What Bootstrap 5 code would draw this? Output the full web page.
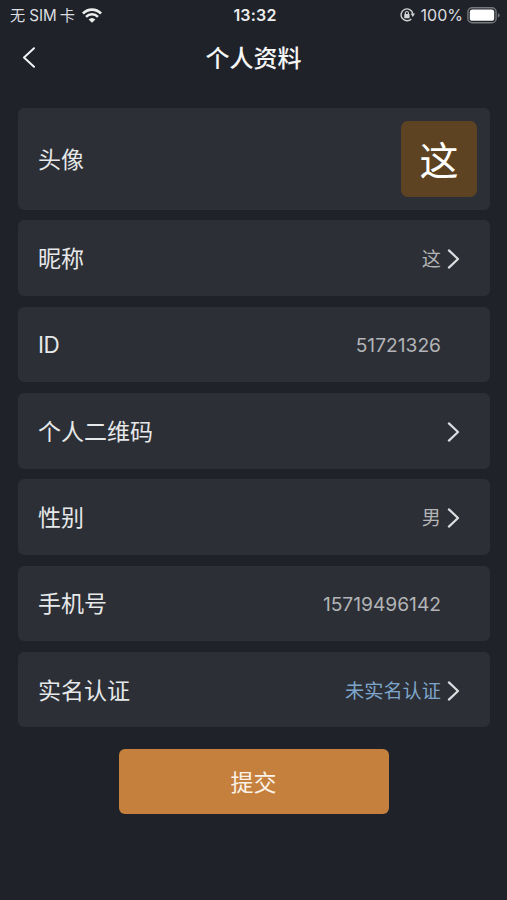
<!DOCTYPE html>
<html lang="zh-CN" data-bs-theme="dark">
<head>
<meta charset="utf-8">
<meta name="viewport" content="width=device-width, initial-scale=1">
<title>个人资料</title>
<link href="https://cdn.jsdelivr.net/npm/bootstrap@5.3.0/dist/css/bootstrap.min.css" rel="stylesheet">
<style>
  body { background: #1f2229; color: #e6e8ea; font-family: Inter, "Noto Sans CJK SC", sans-serif; height: 900px; overflow: hidden; }
  svg { display: block; flex: none; }
  .status-bar { height: 30px; padding: 0 7px 0 10px; font-size: 16px; line-height: 29px; color: #dcdde0; }
  .status-side { flex: 1 1 0; }
  .carrier { font-size: 15.2px; white-space: pre; }
  .carrier-latin { margin: 0 3px 0 4px; }
  .wifi { margin-left: 7px; }
  .clock { font-size: 16px; letter-spacing: .2px; color: #eceded; }
  .battery-text { margin: 0 4px 0 6px; }
  .title-bar { height: 56px; padding: 0 22px; }
  .title-side { width: 14px; }
  .page-title { font-size: 24px; line-height: 36px; padding-top: 2px; font-weight: 500; color: #f6f6f7; }
  .profile-list { padding: 22px 17px 0 18px; gap: 10.7px; }
  .profile-item { height: 75.6px; padding: 2px 13px 0 20px; border-radius: 6px; background: #2c2f35; }
  .profile-item.tall { height: 101.8px; padding-top: 0; }
  .profile-item.id-item { padding-top: 0; }
  .tall .item-label { padding-top: 2px; }
  .item-label { font-size: 23px; line-height: 34px; }
  .item-label.latin { font-size: 22.5px; letter-spacing: -.6px; }
  .item-value { font-size: 19.2px; line-height: 28px; color: #b2b4b7; }
  .item-value.unverified { color: #7ea5cb; }
  .arrow-slot { width: 36px; padding-left: 6px; }
  .avatar-tile { width: 76px; height: 76px; border-radius: 7px; background: #5d4321; color: #fff; font-size: 39px; line-height: 80px; }
  .submit-btn { --bs-btn-bg: #c5803d; --bs-btn-color: #fbf3e9; --bs-btn-hover-bg: #b67436; --bs-btn-hover-color: #fff; --bs-btn-border-width: 0; --bs-btn-border-radius: 6px; --bs-btn-font-size: 23px; width: 270px; height: 65px; margin-top: 21.5px; padding-top: 9px; }
</style>
</head>
<body>
<svg width="0" height="0" class="d-none" aria-hidden="true">
  <symbol id="arrow" viewBox="0 0 13 20"><path d="M1.9 1.4 11 10 1.9 18.6" fill="none" stroke="#dcdde0" stroke-width="2.2" stroke-linecap="round" stroke-linejoin="round"/></symbol>
</svg>

<header>
  <div class="status-bar d-flex align-items-center">
    <div class="status-side d-flex align-items-center">
      <span class="carrier">无<span class="carrier-latin">SIM</span>卡</span>
      <svg class="wifi" width="20" height="15" viewBox="0 0 20 15"><g fill="none" stroke="#eceded" stroke-width="2.6"><path d="M.9 5.5Q4.8 1.6 10 1.6T19.1 5.5"/><path d="M4 8.9Q6.6 6.3 10 6.3T16 8.9"/></g><path d="M6.6 11.5Q10 8.5 13.4 11.5L10 14.8Z" fill="#eceded"/></svg>
    </div>
    <div class="clock fw-semibold">13:32</div>
    <div class="status-side d-flex align-items-center justify-content-end">
      <svg width="15" height="14" viewBox="0 0 15 14"><path d="M11.3 10.9A5.9 5.9 0 1 1 12.8 5.6" fill="none" stroke="#d2d3d5" stroke-width="1.4"/><path d="M10.6 5.6H15L12.8 9Z" fill="#d2d3d5"/><rect x="4.2" y="6" width="5.4" height="4.2" rx=".6" fill="#d2d3d5"/><path d="M5.4 6.3V5a1.5 1.5 0 0 1 3 0v1.3" fill="none" stroke="#d2d3d5" stroke-width="1.2"/></svg>
      <span class="battery-text">100%</span>
      <svg width="33" height="17" viewBox="0 0 33 17"><rect x=".9" y=".7" width="28.2" height="15" rx="4.3" fill="none" stroke="#75777b" stroke-width="1.4"/><rect x="2.8" y="2.6" width="24.4" height="11.2" rx="2.6" fill="#fff"/><path d="M30.9 6q1.7.7 1.7 2.3t-1.7 2.3Z" fill="#75777b"/></svg>
    </div>
  </div>
  <nav class="title-bar d-flex align-items-center justify-content-between">
    <a href="#" class="title-side" aria-label="返回"><svg width="14" height="22" viewBox="0 0 14 22"><path d="M12 1.2 2 10.5 12 19.8" fill="none" stroke="#f1f2f3" stroke-width="2" stroke-linecap="round" stroke-linejoin="round"/></svg></a>
    <h1 class="page-title mb-0">个人资料</h1>
    <span class="title-side"></span>
  </nav>
</header>

<main>
  <div class="profile-list d-flex flex-column">
    <div class="profile-item tall d-flex align-items-center">
      <span class="item-label me-auto">头像</span>
      <span class="avatar-tile text-center">这</span>
    </div>
    <div class="profile-item d-flex align-items-center">
      <span class="item-label me-auto">昵称</span>
      <span class="item-value">这</span>
      <span class="arrow-slot"><svg width="13" height="20"><use href="#arrow"/></svg></span>
    </div>
    <div class="profile-item id-item d-flex align-items-center">
      <span class="item-label latin me-auto">ID</span>
      <span class="item-value">51721326</span>
      <span class="arrow-slot"></span>
    </div>
    <div class="profile-item d-flex align-items-center">
      <span class="item-label me-auto">个人二维码</span>
      <span class="arrow-slot"><svg width="13" height="20"><use href="#arrow"/></svg></span>
    </div>
    <div class="profile-item d-flex align-items-center">
      <span class="item-label me-auto">性别</span>
      <span class="item-value">男</span>
      <span class="arrow-slot"><svg width="13" height="20"><use href="#arrow"/></svg></span>
    </div>
    <div class="profile-item d-flex align-items-center">
      <span class="item-label me-auto">手机号</span>
      <span class="item-value">15719496142</span>
      <span class="arrow-slot"></span>
    </div>
    <div class="profile-item d-flex align-items-center">
      <span class="item-label me-auto">实名认证</span>
      <span class="item-value unverified">未实名认证</span>
      <span class="arrow-slot"><svg width="13" height="20"><use href="#arrow"/></svg></span>
    </div>
  </div>
  <div class="d-flex justify-content-center">
    <button type="button" class="btn submit-btn">提交</button>
  </div>
</main>
<script src="https://cdn.jsdelivr.net/npm/bootstrap@5.3.0/dist/js/bootstrap.bundle.min.js"></script>
</body>
</html>
